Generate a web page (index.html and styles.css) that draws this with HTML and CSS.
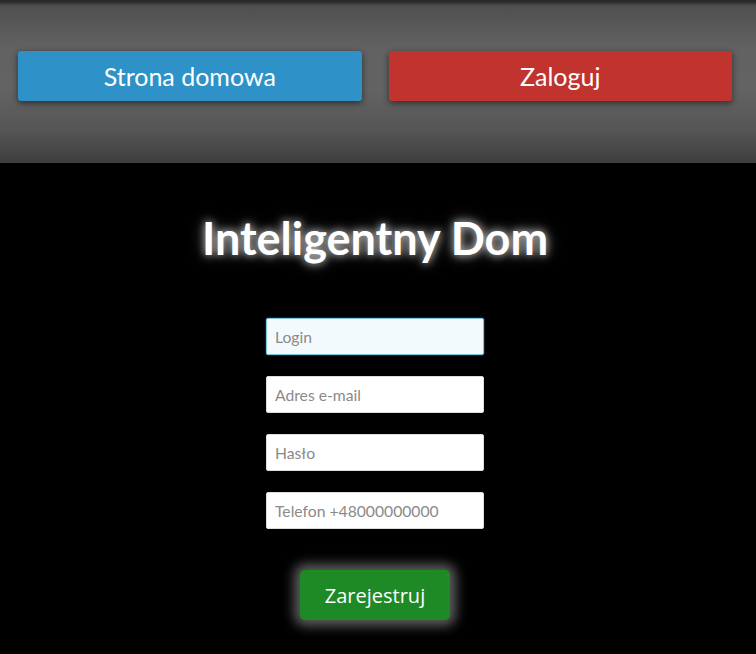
FILE: index.html
```html
<!DOCTYPE html>
<html lang="pl">
<head>
<meta charset="utf-8">
<title>Inteligentny Dom</title>
<link rel="stylesheet" href="styles.css">
</head>
<body>
<header class="top">
  <a class="btn btn-blue" href="#">Strona domowa</a>
  <a class="btn btn-red" href="#">Zaloguj</a>
</header>
<main class="main">
  <h1 class="title">Inteligentny Dom</h1>
  <form class="form">
    <input class="field field-focus" type="text" placeholder="Login">
    <input class="field" type="email" placeholder="Adres e-mail">
    <input class="field" type="password" placeholder="Hasło">
    <input class="field" type="tel" placeholder="Telefon +48000000000">
    <button class="submit" type="button">Zarejestruj</button>
  </form>
</main>
</body>
</html>
```
FILE: styles.css
```css
html, body {
  margin: 0;
  padding: 0;
  background: #000;
  font-family: Lato, "Open Sans", sans-serif;
}
.top {
  height: 163px;
  box-sizing: border-box;
  padding: 51px 24px 0 18px;
  display: flex;
  gap: 27px;
  align-items: flex-start;
  background: linear-gradient(to bottom, #262626 0, #2e2e2e 2px, #505050 6px, #626262 30%, #636363 55%, #555 80%, #3e3e3e 100%);
}
.btn {
  flex: 1;
  height: 50px;
  display: flex;
  align-items: center;
  justify-content: center;
  color: #fff;
  text-decoration: none;
  font-size: 25px;
  border-radius: 3px;
  box-shadow: 0 2px 6px rgba(0,0,0,0.55);
}
.btn-blue { background: #2e92c8; }
.btn-red { background: #c0332f; }
.main {
  display: flex;
  flex-direction: column;
  align-items: center;
  padding-right: 6px;
  padding-bottom: 20px;
}
.title {
  margin: 47px 0 0;
  height: 56px;
  line-height: 56px;
  color: #fff;
  font-size: 45px;
  font-weight: 700;
  text-shadow: 0 0 8px rgba(255,255,255,0.8), 0 0 16px rgba(255,255,255,0.4);
}
.form {
  margin-top: 52px;
  display: flex;
  flex-direction: column;
  align-items: center;
  gap: 21px;
}
.field {
  box-sizing: border-box;
  width: 218px;
  height: 37px;
  margin: 0;
  padding: 0 8px;
  border: 1px solid #ddd;
  border-radius: 2px;
  background: #fff;
  font-family: Lato, sans-serif;
  font-size: 15.7px;
  color: #333;
  outline: none;
}
.field::placeholder { color: #8a8a8a; }
.field-focus {
  border: 1px solid #7fc4dc;
  background: #f3fafd;
  box-shadow: 0 0 2px rgba(120,190,220,0.6);
}
.submit {
  margin-top: 20px;
  width: 150px;
  height: 50px;
  border: none;
  border-radius: 5px;
  background: #1e8a26;
  color: #fff;
  font-family: "Open Sans", sans-serif;
  font-size: 20px;
  box-shadow: 0 0 12px 6px rgba(170,170,170,0.55);
  cursor: pointer;
}
```
